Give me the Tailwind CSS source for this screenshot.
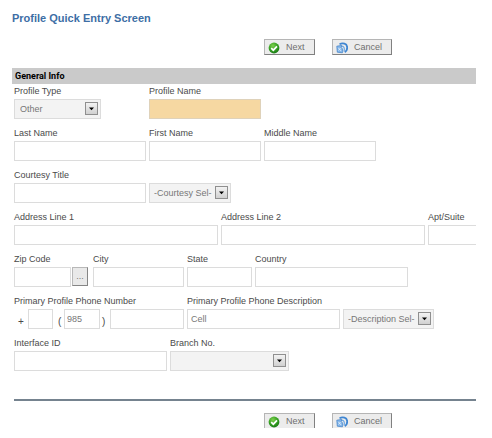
<!DOCTYPE html>
<html lang="en">
<head>
<meta charset="utf-8">
<meta name="viewport" content="width=device-width, initial-scale=1">
<title>Profile Quick Entry Screen</title>
<script src="https://cdn.jsdelivr.net/npm/@tailwindcss/browser@4"></script>
</head>
<body class="bg-white">
<svg class="absolute size-0" aria-hidden="true">
  <defs>
    <radialGradient id="green" cx="40%" cy="30%" r="75%"><stop offset="0" stop-color="#7fd04e"/><stop offset="0.55" stop-color="#35a022"/><stop offset="1" stop-color="#187515"/></radialGradient>
    <linearGradient id="face" x1="0" y1="0" x2="0" y2="1"><stop offset="0" stop-color="#f4f4f4"/><stop offset="1" stop-color="#cfcfcf"/></linearGradient>
    <symbol id="next" viewBox="0 0 12 12">
      <circle cx="6" cy="6" r="5.4" fill="url(#green)"/>
      <path d="M3.2 6.2 5.3 8.2 9 4.3" fill="none" stroke="#fff" stroke-width="1.7"/>
    </symbol>
    <symbol id="cancel" viewBox="0 0 12 12">
      <path d="M3.500 2.200C6.500 .6 11.200 1.200 11.200 5.600C11.200 7.800 10.300 9.400 8.800 10.200" fill="none" stroke="#3f86d2" stroke-width="1.800"/>
      <path d="M5.500 4.500C8 4 8.800 6 8.200 9.500" fill="none" stroke="#6fa8e2" stroke-width="1.200"/>
      <path d="M.8 4.200 5.800 3.400 5.200 5.400C7 6.600 7 8.800 6.400 10.800L1.300 10.200Z" fill="#86b7ea" stroke="#3a7cc6" stroke-width=".7"/>
      <path d="M2.300 5.800 5 8.900M2.400 8.500 4.600 6.200" stroke="#e4f0fc" stroke-width=".9"/>
    </symbol>
    <symbol id="arrow" viewBox="0 0 13 13">
      <rect x=".5" y=".5" width="12" height="12" fill="url(#face)" stroke="#8f8f8f"/>
      <path d="M4 5.500h5L6.500 8.300Z" fill="#000"/>
    </symbol>
  </defs>
</svg>
<main class="mr-4 flex h-[calc(100vh-10px)] flex-col overflow-hidden pl-3 font-['Liberation_Sans',Arial,sans-serif] text-[9px] text-[#4a4a4a]">
  <h1 class="shrink-0 pt-3 text-[11px] leading-3 font-bold text-[#3d6ea5]">Profile Quick Entry Screen</h1>

  <div class="flex shrink-0 gap-[17px] pt-[15px] pl-[252px]">
    <button type="button" class="flex h-4 w-[51px] shrink-0 items-center gap-[6px] border border-[#b5b5b5] border-r-[#808080] border-b-[#808080] bg-[#ececec] pt-px pl-[3px] text-[#6f6f6f]"><svg class="size-3 shrink-0"><use href="#next"/></svg>Next</button>
    <button type="button" class="flex h-4 w-[60px] shrink-0 items-center gap-[6px] border border-[#b5b5b5] border-r-[#808080] border-b-[#808080] bg-[#ececec] pt-px pl-[3px] text-[#6f6f6f]"><svg class="size-3 shrink-0"><use href="#cancel"/></svg>Cancel</button>
  </div>

  <h2 class="mt-[13px] h-4 shrink-0 bg-[#cacaca] pl-[3px] font-[Roboto,sans-serif] leading-4 font-bold text-black">General Info</h2>

  <form class="flex shrink-0 flex-col gap-[7px] pl-[2px] leading-[15px]">
    <div class="flex gap-12">
      <div class="w-[87px] shrink-0">
        <label for="type" class="block">Profile Type</label>
        <div class="relative">
          <select id="type" class="block h-5 w-full appearance-none border border-[#dcdcdc] bg-[#f3f3f3] pl-[5px] text-[9px] text-[#777]"><option>Other</option></select>
          <svg class="pointer-events-none absolute top-[3px] right-[3px] size-[13px]"><use href="#arrow"/></svg>
        </div>
      </div>
      <div class="w-28 shrink-0">
        <label for="name" class="block">Profile Name</label>
        <input id="name" type="text" class="block h-5 w-full border border-[#dfd2ba] bg-[#f6d8a2] px-1">
      </div>
    </div>

    <div class="flex gap-[3px]">
      <div class="w-[132px] shrink-0"><label for="last" class="block">Last Name</label><input id="last" type="text" class="block h-5 w-full border border-[#dcdcdc] px-1"></div>
      <div class="w-28 shrink-0"><label for="first" class="block">First Name</label><input id="first" type="text" class="block h-5 w-full border border-[#dcdcdc] px-1"></div>
      <div class="w-28 shrink-0"><label for="middle" class="block">Middle Name</label><input id="middle" type="text" class="block h-5 w-full border border-[#dcdcdc] px-1"></div>
    </div>

    <div class="flex items-end gap-[3px]">
      <div class="w-[132px] shrink-0"><label for="title" class="block">Courtesy Title</label><input id="title" type="text" class="block h-5 w-full border border-[#dcdcdc] px-1"></div>
      <div class="relative w-[82px] shrink-0">
        <select aria-label="Courtesy selection" class="block h-5 w-full appearance-none border border-[#dcdcdc] bg-[#f3f3f3] pl-1 text-[9px] text-[#777]"><option>-Courtesy Sel-</option></select>
        <svg class="pointer-events-none absolute top-[3px] right-[3px] size-[13px]"><use href="#arrow"/></svg>
      </div>
    </div>

    <div class="flex gap-[3px]">
      <div class="w-[204px] shrink-0"><label for="addr1" class="block">Address Line 1</label><input id="addr1" type="text" class="block h-5 w-full border border-[#dcdcdc] px-1"></div>
      <div class="w-[204px] shrink-0"><label for="addr2" class="block">Address Line 2</label><input id="addr2" type="text" class="block h-5 w-full border border-[#dcdcdc] px-1"></div>
      <div class="w-28 shrink-0"><label for="apt" class="block">Apt/Suite</label><input id="apt" type="text" class="block h-5 w-full border border-[#dcdcdc] px-1"></div>
    </div>

    <div class="flex items-end gap-[3px]">
      <div class="w-[76px] shrink-0">
        <label for="zip" class="block">Zip Code</label>
        <div class="flex gap-px">
          <input id="zip" type="text" class="block h-5 w-[57px] border border-[#dcdcdc] px-1">
          <button type="button" aria-label="Look up zip code" class="h-[19px] w-4 border border-[#b8b8b8] border-r-[#858585] border-b-[#858585] bg-[#e9e9e9] text-center text-[#777]">...</button>
        </div>
      </div>
      <div class="w-[91px] shrink-0"><label for="city" class="block">City</label><input id="city" type="text" class="block h-5 w-full border border-[#dcdcdc] px-1"></div>
      <div class="w-[65px] shrink-0"><label for="state" class="block">State</label><input id="state" type="text" class="block h-5 w-full border border-[#dcdcdc] px-1"></div>
      <div class="w-[153px] shrink-0"><label for="country" class="block">Country</label><input id="country" type="text" class="block h-5 w-full border border-[#dcdcdc] px-1"></div>
    </div>

    <div class="flex items-end gap-[3px]">
      <div class="w-[170px] shrink-0">
        <label for="phone" class="block">Primary Profile Phone Number</label>
        <div class="flex items-center text-[10px]">
          <span class="w-[14px] shrink-0 pt-1 pl-1">+</span>
          <input aria-label="Country code" type="text" class="h-5 w-[25px] border border-[#dcdcdc] px-[3px]">
          <span class="w-[11px] shrink-0 pt-1 pl-[5px]">(</span>
          <input aria-label="Area code" type="text" value="985" class="h-5 w-[36px] border border-[#dcdcdc] px-[2px] text-[9px] text-[#777]">
          <span class="w-[10px] shrink-0 pt-1 pl-[2px]">)</span>
          <input id="phone" type="text" class="h-5 w-[74px] border border-[#dcdcdc] px-1">
        </div>
      </div>
      <div class="w-[153px] shrink-0"><label for="desc" class="block whitespace-nowrap">Primary Profile Phone Description</label><input id="desc" type="text" value="Cell" class="block h-5 w-full border border-[#dcdcdc] px-[3px] text-[9px] text-[#777]"></div>
      <div class="relative w-[91px] shrink-0">
        <select aria-label="Description selection" class="block h-5 w-full appearance-none border border-[#dcdcdc] bg-[#f3f3f3] pl-1 text-[9px] text-[#777]"><option>-Description Sel-</option></select>
        <svg class="pointer-events-none absolute top-[3px] right-[3px] size-[13px]"><use href="#arrow"/></svg>
      </div>
    </div>

    <div class="flex gap-[3px]">
      <div class="w-[153px] shrink-0"><label for="iface" class="block">Interface ID</label><input id="iface" type="text" class="block h-5 w-full border border-[#dcdcdc] px-1"></div>
      <div class="w-[119px] shrink-0">
        <label for="branch" class="block">Branch No.</label>
        <div class="relative">
          <select id="branch" class="block h-5 w-full appearance-none border border-[#dcdcdc] bg-[#f3f3f3] pl-1 text-[9px] text-[#777]"><option></option></select>
          <svg class="pointer-events-none absolute top-[3px] right-[3px] size-[13px]"><use href="#arrow"/></svg>
        </div>
      </div>
    </div>
  </form>

  <hr class="mt-7 ml-[2px] shrink-0 border-0 border-t-2 border-[#75838f]">

  <div class="flex shrink-0 gap-[17px] pt-3 pl-[252px]">
    <button type="button" class="flex h-4 w-[51px] shrink-0 items-center gap-[6px] border border-[#b5b5b5] border-r-[#808080] border-b-[#808080] bg-[#ececec] pt-px pl-[3px] text-[#6f6f6f]"><svg class="size-3 shrink-0"><use href="#next"/></svg>Next</button>
    <button type="button" class="flex h-4 w-[60px] shrink-0 items-center gap-[6px] border border-[#b5b5b5] border-r-[#808080] border-b-[#808080] bg-[#ececec] pt-px pl-[3px] text-[#6f6f6f]"><svg class="size-3 shrink-0"><use href="#cancel"/></svg>Cancel</button>
  </div>
</main>
</body>
</html>
